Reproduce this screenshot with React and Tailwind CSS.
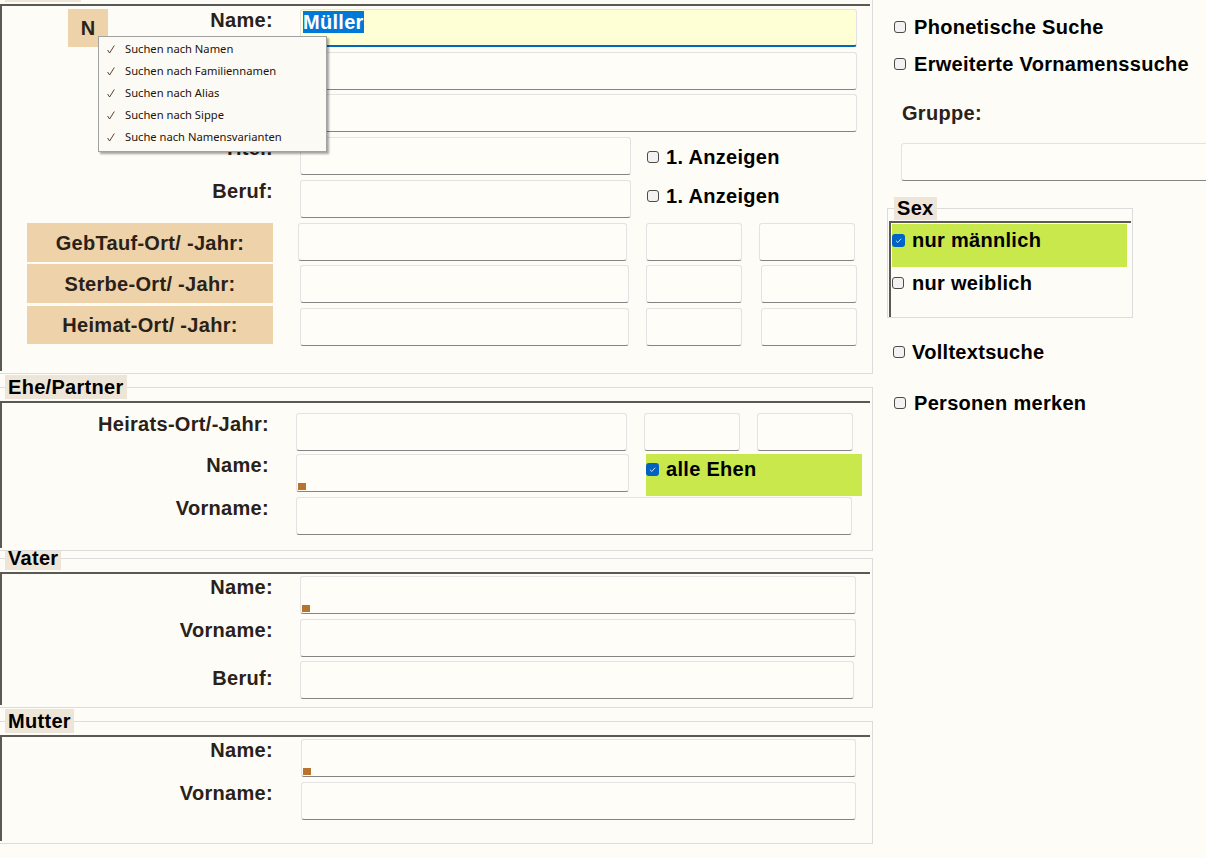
// Personensuche — Suchmaske mit Namens-Kontextmenü
const LABEL = "text-[20px] font-bold leading-[22px] tracking-[0.3px] text-[#2a2118] whitespace-nowrap";
const CHECK_TEXT = "text-[20px] font-bold leading-[22px] tracking-[0.3px] text-black whitespace-nowrap";

function Field({ className = "", mark = false }) {
  return (
    <div className={`relative h-[38px] shrink-0 rounded-[3px] border border-[#e3e3e3] border-b-[#848484] bg-[#fffdf8] ${className}`}>
      {mark && <span className="absolute bottom-[1px] left-[1px] h-[7px] w-[8px] bg-[#b8742f]" />}
    </div>
  );
}

function Box({ checked }) {
  if (checked) {
    return (
      <span className="flex h-[13px] w-[13px] shrink-0 items-center justify-center rounded-[3px] bg-[#0063c4]">
        <svg viewBox="0 0 10 10" className="h-[9px] w-[9px]">
          <path d="M2.2 5.3 L4.2 7.2 L7.9 3" fill="none" stroke="#cfe3ff" strokeWidth="1.1" />
        </svg>
      </span>
    );
  }
  return <span className="h-[12px] w-[12px] shrink-0 rounded-[3px] border border-[#4b4b4b] bg-[#f2f2f2]" />;
}

function Check({ label, checked = false, className = "", gap = "ml-[8px]" }) {
  return (
    <div className={`flex items-center ${className}`}>
      <Box checked={checked} />
      <span className={`${gap} ${CHECK_TEXT}`}>{label}</span>
    </div>
  );
}

function Section({ title, inner, className = "", children }) {
  return (
    <fieldset className={`min-w-0 border-y border-r border-[#dcdcdc] p-0 ${className}`}>
      <legend className="ml-[5px] bg-[#eee5d9] px-[3px] text-[20px] font-bold leading-[24px] tracking-[0.3px] text-black">
        {title}
      </legend>
      <div className={`mt-[2px] mr-[2px] mb-[2px] border-t-2 border-l-2 border-[#5b5954] ${inner}`}>{children}</div>
    </fieldset>
  );
}

const menuItems = [
  "Suchen nach Namen",
  "Suchen nach Familiennamen",
  "Suchen nach Alias",
  "Suchen nach Sippe",
  "Suche nach Namensvarianten",
];

function NameMenu() {
  return (
    <div className="absolute left-[98px] top-[36px] w-[229px] border border-[#a2a2a2] bg-[#fcfaf5] pt-[1px] pb-[3px] shadow-[2px_2px_2px_rgba(0,0,0,0.35)]">
      {menuItems.map((item) => (
        <div key={item} className="flex h-[22px] items-center">
          <svg viewBox="0 0 8 9" className="ml-[8px] h-[9px] w-[8px]">
            <path d="M0.6 5 L2.6 8 L7.3 0.5" fill="none" stroke="#4a2a20" strokeWidth="0.9" />
          </svg>
          <span className="ml-[10px] font-['Noto_Sans',sans-serif] text-[11.2px] text-[#1c120c]">{item}</span>
        </div>
      ))}
    </div>
  );
}

function Beige({ children, className = "" }) {
  return (
    <div className={`ml-[25px] flex w-[246px] shrink-0 items-center justify-center bg-[#edd2aa] ${LABEL} ${className}`}>
      {children}
    </div>
  );
}

export default function App() {
  return (
    <div className="relative flex h-[858px] w-[1206px] overflow-hidden bg-[#fefcf6] font-['Liberation_Sans',Arial,sans-serif]">
      {/* linke Spalte */}
      <div className="flex w-[873px] shrink-0 flex-col">
        <Section title="Person" className="-mt-[22px]" inner="h-[367px]">
          <div className="mt-[3px] flex h-[38px]">
            <div className="flex w-[271px] shrink-0">
              <div className="ml-[66px] flex h-[38px] w-[40px] items-center justify-center bg-[#edd2aa] text-[20px] font-bold text-[#2a2118]">N</div>
              <span className={`ml-auto ${LABEL}`}>Name:</span>
            </div>
            <div className="ml-[27px] h-[38px] w-[557px] rounded-[3px] border border-[#e3e3e3] border-b-2 border-b-[#0067c0] bg-[#ffffd6] pl-[2px] pt-[2px]">
              <span className="bg-[#0078d7] text-[20px] font-bold leading-[21px] tracking-[0.3px] text-white">Müller</span>
            </div>
          </div>
          <div className="mt-[5px] flex h-[38px]">
            <span className={`w-[271px] shrink-0 text-right ${LABEL}`}>Vorname:</span>
            <Field className="ml-[27px] w-[557px]" />
          </div>
          <div className="mt-[4px] flex h-[38px]">
            <span className={`w-[271px] shrink-0 text-right ${LABEL}`}>Alias:</span>
            <Field className="ml-[27px] w-[557px]" />
          </div>
          <div className="mt-[5px] flex h-[38px]">
            <span className={`w-[271px] shrink-0 text-right ${LABEL}`}>Titel:</span>
            <Field className="ml-[27px] w-[331px]" />
            <Check label="1. Anzeigen" className="ml-[16px] mt-[9px] h-[22px]" gap="ml-[7px]" />
          </div>
          <div className="mt-[5px] flex h-[38px]">
            <span className={`w-[271px] shrink-0 text-right ${LABEL}`}>Beruf:</span>
            <Field className="ml-[27px] w-[331px]" />
            <Check label="1. Anzeigen" className="ml-[16px] mt-[5px] h-[22px]" gap="ml-[7px]" />
          </div>
          <div className="mt-[5px] flex h-[39px]">
            <Beige>GebTauf-Ort/ -Jahr:</Beige>
            <Field className="ml-[25px] w-[329px]" />
            <Field className="ml-[19px] w-[96px]" />
            <Field className="ml-[17px] w-[96px]" />
          </div>
          <div className="mt-[2px] flex h-[39px]">
            <Beige>Sterbe-Ort/ -Jahr:</Beige>
            <Field className="ml-[27px] mt-[1px] w-[329px]" />
            <Field className="ml-[17px] mt-[1px] w-[96px]" />
            <Field className="ml-[19px] mt-[1px] w-[96px]" />
          </div>
          <div className="mt-[3px] flex h-[40px]">
            <Beige className="h-[38px]">Heimat-Ort/ -Jahr:</Beige>
            <Field className="ml-[27px] mt-[2px] w-[329px]" />
            <Field className="ml-[17px] mt-[2px] w-[96px]" />
            <Field className="ml-[19px] mt-[2px] w-[96px]" />
          </div>
        </Section>

        <Section title="Ehe/Partner" className="relative z-10 mt-[1px] bg-[#fefcf6]" inner="h-[147px]">
          <div className="mt-[10px] flex h-[38px]">
            <span className={`w-[267px] shrink-0 text-right ${LABEL}`}>Heirats-Ort/-Jahr:</span>
            <Field className="ml-[27px] w-[331px]" />
            <Field className="ml-[17px] w-[96px]" />
            <Field className="ml-[17px] w-[96px]" />
          </div>
          <div className="mt-[3px] flex h-[38px]">
            <span className={`w-[267px] shrink-0 text-right ${LABEL}`}>Name:</span>
            <Field className="ml-[27px] w-[333px]" mark />
            <div className="ml-[17px] h-[42px] w-[216px] shrink-0 bg-[#c8e84b] pt-[4px]">
              <Check label="alle Ehen" checked className="h-[22px]" gap="ml-[7px]" />
            </div>
          </div>
          <div className="mt-[5px] flex h-[38px]">
            <span className={`w-[267px] shrink-0 text-right ${LABEL}`}>Vorname:</span>
            <Field className="ml-[27px] w-[556px]" />
          </div>
        </Section>

        <Section title="Vater" className="-mt-[5px]" inner="h-[133px]">
          <div className="mt-[2px] flex h-[38px]">
            <span className={`w-[271px] shrink-0 text-right ${LABEL}`}>Name:</span>
            <Field className="ml-[27px] w-[556px]" mark />
          </div>
          <div className="mt-[5px] flex h-[38px]">
            <span className={`w-[271px] shrink-0 text-right ${LABEL}`}>Vorname:</span>
            <Field className="ml-[27px] w-[556px]" />
          </div>
          <div className="mt-[4px] flex h-[38px]">
            <span className={`w-[271px] shrink-0 pt-[6px] text-right ${LABEL}`}>Beruf:</span>
            <Field className="ml-[27px] w-[554px]" />
          </div>
        </Section>

        <Section title="Mutter" className="mt-[1px]" inner="h-[106px]">
          <div className="mt-[2px] flex h-[38px]">
            <span className={`w-[271px] shrink-0 text-right ${LABEL}`}>Name:</span>
            <Field className="ml-[28px] w-[555px]" mark />
          </div>
          <div className="mt-[5px] flex h-[38px]">
            <span className={`w-[271px] shrink-0 text-right ${LABEL}`}>Vorname:</span>
            <Field className="ml-[28px] w-[555px]" />
          </div>
        </Section>
      </div>

      {/* rechte Spalte */}
      <div className="flex min-w-0 flex-1 flex-col overflow-hidden">
        <Check label="Phonetische Suche" className="ml-[21px] mt-[15px] h-[24px]" />
        <Check label="Erweiterte Vornamenssuche" className="ml-[21px] mt-[13px] h-[24px]" />
        <span className={`ml-[29px] mt-[25px] ${LABEL} leading-[24px]`}>Gruppe:</span>
        <Field className="ml-[28px] mt-[18px] w-[330px]" />

        <fieldset className="ml-[14px] mt-[16px] w-[246px] min-w-0 border border-[#dcdcdc] p-0">
          <legend className="ml-[6px] bg-[#eee5d9] px-[3px] text-[20px] font-bold leading-[23px] tracking-[0.3px] text-black">Sex</legend>
          <div className="mt-[1px] ml-[1px] mr-[1px] h-[96px] border-t-2 border-l-2 border-[#5b5954]">
            <div className="ml-[1px] mt-[1px] h-[43px] w-[235px] bg-[#c8e84b] pt-[5px]">
              <Check label="nur männlich" checked className="h-[22px]" gap="ml-[7px]" />
            </div>
            <Check label="nur weiblich" className="ml-[1px] mt-[5px] h-[22px]" gap="ml-[8px]" />
          </div>
        </fieldset>

        <Check label="Volltextsuche" className="ml-[20px] mt-[22px] h-[24px]" gap="ml-[7px]" />
        <Check label="Personen merken" className="ml-[21px] mt-[27px] h-[24px]" />
      </div>

      <NameMenu />
    </div>
  );
}
